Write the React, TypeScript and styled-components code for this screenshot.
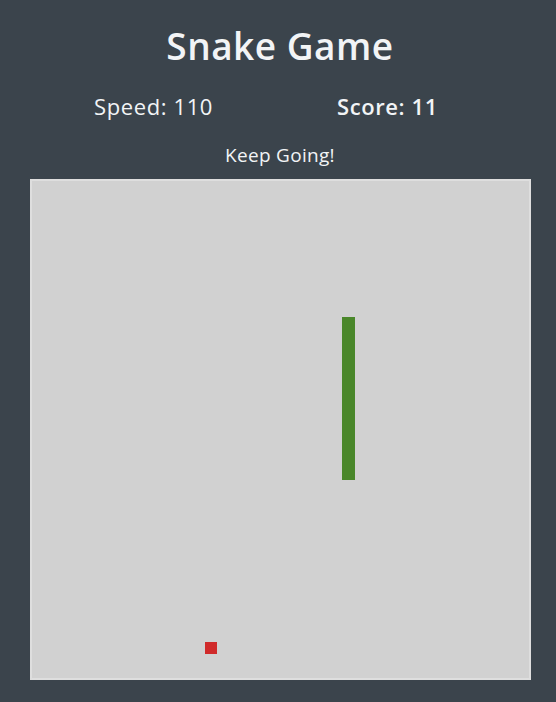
import React from "react";
import styled, { createGlobalStyle } from "styled-components";

const Global = createGlobalStyle`
  html, body { margin: 0; padding: 0; background: #3b444c; overflow: hidden; }
  body { font-family: "Open Sans", "Noto Sans", sans-serif; color: #f2f4f6; }
`;

const Page = styled.div`
  width: 560px;
  height: 702px;
  display: flex;
  flex-direction: column;
  align-items: center;
  background: #3b444c;
`;

const Title = styled.h1`
  margin: 22px 0 0;
  font-size: 37px;
  line-height: 48px;
  font-weight: 600;
  letter-spacing: 0.5px;
`;

const Stats = styled.div`
  display: flex;
  justify-content: center;
  gap: 124px;
  margin-top: 22px;
  margin-right: 28px;
  height: 28px;
  align-items: center;
`;

const Stat = styled.div<{ $bold?: boolean }>`
  font-size: 22px;
  letter-spacing: 0.6px;
  font-weight: ${(p) => (p.$bold ? 600 : 400)};
`;

const Message = styled.div`
  margin-top: 23px;
  font-size: 19px;
  line-height: 24px;
  letter-spacing: 0.3px;
`;

const Board = styled.div`
  position: relative;
  margin-top: 12px;
  width: 501px;
  height: 501px;
  box-sizing: border-box;
  background: #d1d1d1;
  border: 2px solid #dedede;
`;

const Cell = styled.div<{ $color: string }>`
  position: absolute;
  background: ${(p) => p.$color};
`;

const CELL = 12.5;

const snake = Array.from({ length: 13 }, (_, i) => ({ x: 25, y: 11 + i }));
const food = { x: 14, y: 37 };

export default function App() {
  return (
    <>
      <Global />
      <Page>
        <Title>Snake Game</Title>
        <Stats>
          <Stat>Speed: 110</Stat>
          <Stat $bold>Score: 11</Stat>
        </Stats>
        <Message>Keep Going!</Message>
        <Board>
          {snake.map((s, i) => (
            <Cell
              key={i}
              $color="#4a872a"
              style={{ left: s.x * CELL - 2, top: s.y * CELL - 2, width: CELL, height: CELL + 0.5 }}
            />
          ))}
          <Cell
            $color="#d02a2a"
            style={{ left: food.x * CELL - 2, top: food.y * CELL - 2, width: CELL, height: CELL }}
          />
        </Board>
      </Page>
    </>
  );
}
